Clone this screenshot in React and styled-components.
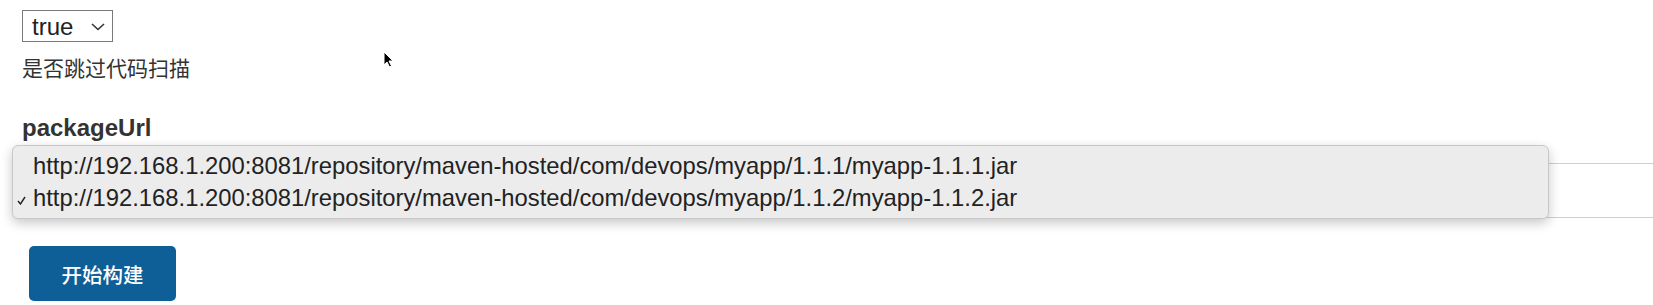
import React from "react";
import styled, { createGlobalStyle } from "styled-components";

const Global = createGlobalStyle`
  html, body { margin: 0; padding: 0; background: #fff; overflow: hidden; }
  body { font-family: "Liberation Sans", "Noto Sans CJK SC", sans-serif; color: #333; }
`;

const Page = styled.div`
  position: relative;
  width: 1653px;
  height: 305px;
  padding: 10px 0 0 22px;
  box-sizing: border-box;
  display: flex;
  flex-direction: column;
  align-items: flex-start;
`;

const Field = styled.div`
  display: flex;
  flex-direction: column;
  align-items: flex-start;
  align-self: stretch;
  margin-bottom: ${(p) => p.$gap || 0}px;
`;

const SelectBox = styled.div`
  box-sizing: border-box;
  width: 91px;
  height: 32px;
  border: 1px solid #7a7a7a;
  display: flex;
  align-items: center;
  justify-content: space-between;
  padding: 2px 7px 0 9px;
  font-size: 24px;
  color: #222;
  background: #fff;
`;

const Help = styled.div`
  margin-top: 11px;
  font-family: "Noto Sans CJK SC", sans-serif;
  font-size: 21px;
  line-height: 28px;
  color: #333;
`;

const FieldLabel = styled.div`
  font-size: 24px;
  font-weight: 700;
  line-height: 28px;
  color: #333;
`;

const InputWrap = styled.div`
  position: relative;
  margin-top: 21px;
  align-self: stretch;
`;

const UrlInput = styled.div`
  box-sizing: border-box;
  width: 1700px;
  height: 55px;
  border: 1px solid #cfcfcf;
  background: #fff;
`;

const Menu = styled.div`
  position: absolute;
  left: -10px;
  top: -18px;
  width: 1537px;
  box-sizing: border-box;
  padding: 4px 0;
  background: #ececec;
  border: 1px solid #c8c8c8;
  border-radius: 6px;
  box-shadow: 0 4px 12px rgba(0, 0, 0, 0.22);
`;

const MenuItem = styled.div`
  position: relative;
  height: 32px;
  line-height: 32px;
  padding-left: 20px;
  font-size: 23.8px;
  color: #222;
  white-space: nowrap;
`;

const Check = styled.svg`
  position: absolute;
  left: 4px;
  top: 14px;
`;

const BuildButton = styled.button`
  margin-left: 7px;
  margin-top: 28px;
  width: 147px;
  height: 55px;
  border: none;
  border-radius: 5px;
  background: #0e5e98;
  color: #fff;
  font-family: "Noto Sans CJK SC", sans-serif;
  font-size: 20.5px;
  font-weight: 500;
  padding: 0;
`;

const Cursor = styled.svg`
  position: absolute;
  left: 383px;
  top: 51px;
`;

const Chevron = () => (
  <svg width="14" height="8" viewBox="0 0 14 8">
    <path d="M1 1 L7 6.5 L13 1" fill="none" stroke="#333" strokeWidth="1.6" />
  </svg>
);

const urls = [
  "http://192.168.1.200:8081/repository/maven-hosted/com/devops/myapp/1.1.1/myapp-1.1.1.jar",
  "http://192.168.1.200:8081/repository/maven-hosted/com/devops/myapp/1.1.2/myapp-1.1.2.jar",
];

export default function App() {
  return (
    <>
      <Global />
      <Page>
        <Field $gap={33}>
          <SelectBox>
            <span>true</span>
            <Chevron />
          </SelectBox>
          <Help>是否跳过代码扫描</Help>
        </Field>
        <Field>
          <FieldLabel>packageUrl</FieldLabel>
          <InputWrap>
            <UrlInput />
            <Menu>
              {urls.map((u, i) => (
                <MenuItem key={u}>
                  {i === 1 && (
                    <Check width="9" height="9" viewBox="0 0 9 9">
                      <path d="M1 5 L3.5 8 L8 1" fill="none" stroke="#222" strokeWidth="1.4" />
                    </Check>
                  )}
                  {u}
                </MenuItem>
              ))}
            </Menu>
          </InputWrap>
        </Field>
        <BuildButton>开始构建</BuildButton>
        <Cursor width="11" height="17" viewBox="0 0 11 17">
          <path d="M1 1 L1 14 L4 11 L6.5 16 L8.5 15 L6 10 L10 10 Z" fill="#000" stroke="#fff" strokeWidth="1" />
        </Cursor>
      </Page>
    </>
  );
}
